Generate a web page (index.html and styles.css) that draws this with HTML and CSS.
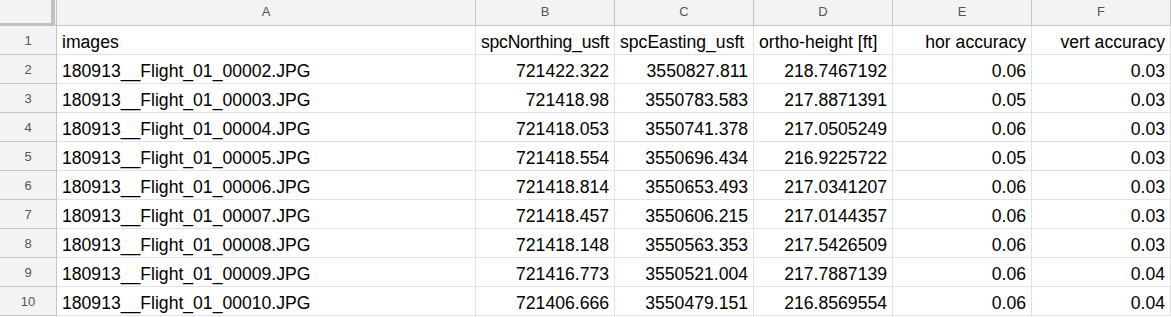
FILE: index.html
```html
<!DOCTYPE html>
<html>
<head>
<meta charset="utf-8">
<link rel="stylesheet" href="styles.css">
</head>
<body>
<div class="sheet">
  <div class="hdr corner"><div class="corner-bar"></div></div>
  <div class="hdr col">A</div>
  <div class="hdr col">B</div>
  <div class="hdr col">C</div>
  <div class="hdr col">D</div>
  <div class="hdr col">E</div>
  <div class="hdr col">F</div>

  <div class="rn">1</div>
  <div class="c">images</div>
  <div class="c tight">spcNorthing_usft</div>
  <div class="c">spcEasting_usft</div>
  <div class="c">ortho-height [ft]</div>
  <div class="c r">hor accuracy</div>
  <div class="c r">vert accuracy</div>

  <div class="rn">2</div>
  <div class="c">180913__Flight_01_00002.JPG</div>
  <div class="c r">721422.322</div>
  <div class="c r">3550827.811</div>
  <div class="c r">218.7467192</div>
  <div class="c r">0.06</div>
  <div class="c r">0.03</div>

  <div class="rn">3</div>
  <div class="c">180913__Flight_01_00003.JPG</div>
  <div class="c r">721418.98</div>
  <div class="c r">3550783.583</div>
  <div class="c r">217.8871391</div>
  <div class="c r">0.05</div>
  <div class="c r">0.03</div>

  <div class="rn">4</div>
  <div class="c">180913__Flight_01_00004.JPG</div>
  <div class="c r">721418.053</div>
  <div class="c r">3550741.378</div>
  <div class="c r">217.0505249</div>
  <div class="c r">0.06</div>
  <div class="c r">0.03</div>

  <div class="rn">5</div>
  <div class="c">180913__Flight_01_00005.JPG</div>
  <div class="c r">721418.554</div>
  <div class="c r">3550696.434</div>
  <div class="c r">216.9225722</div>
  <div class="c r">0.05</div>
  <div class="c r">0.03</div>

  <div class="rn">6</div>
  <div class="c">180913__Flight_01_00006.JPG</div>
  <div class="c r">721418.814</div>
  <div class="c r">3550653.493</div>
  <div class="c r">217.0341207</div>
  <div class="c r">0.06</div>
  <div class="c r">0.03</div>

  <div class="rn">7</div>
  <div class="c">180913__Flight_01_00007.JPG</div>
  <div class="c r">721418.457</div>
  <div class="c r">3550606.215</div>
  <div class="c r">217.0144357</div>
  <div class="c r">0.06</div>
  <div class="c r">0.03</div>

  <div class="rn">8</div>
  <div class="c">180913__Flight_01_00008.JPG</div>
  <div class="c r">721418.148</div>
  <div class="c r">3550563.353</div>
  <div class="c r">217.5426509</div>
  <div class="c r">0.06</div>
  <div class="c r">0.03</div>

  <div class="rn">9</div>
  <div class="c">180913__Flight_01_00009.JPG</div>
  <div class="c r">721416.773</div>
  <div class="c r">3550521.004</div>
  <div class="c r">217.7887139</div>
  <div class="c r">0.06</div>
  <div class="c r">0.04</div>

  <div class="rn">10</div>
  <div class="c">180913__Flight_01_00010.JPG</div>
  <div class="c r">721406.666</div>
  <div class="c r">3550479.151</div>
  <div class="c r">216.8569554</div>
  <div class="c r">0.06</div>
  <div class="c r">0.04</div>
</div>
</body>
</html>
```

FILE: styles.css
```css
html, body {
  margin: 0;
  padding: 0;
  background: #ffffff;
}

.sheet {
  display: grid;
  grid-template-columns: 57px 419px repeat(5, 139px);
  grid-template-rows: 26px repeat(10, 29px);
  font-family: "Liberation Sans", Arial, sans-serif;
}

.sheet > div {
  box-sizing: border-box;
  overflow: hidden;
  white-space: nowrap;
}

.hdr {
  background: #f3f3f3;
  border-right: 1px solid #c4c4c4;
  border-bottom: 1px solid #c4c4c4;
  color: #555555;
  font-size: 13px;
  display: flex;
  align-items: center;
  justify-content: center;
  padding-bottom: 2px;
}

.corner {
  padding: 0 1px 0 0;
  align-items: stretch;
  justify-content: stretch;
}

.corner-bar {
  flex: 1;
  border-right: 4px solid #c0c0c0;
  border-bottom: 4px solid #c0c0c0;
  margin-bottom: -2px;
}

.rn {
  background: #f3f3f3;
  border-right: 1px solid #c4c4c4;
  border-bottom: 1px solid #c4c4c4;
  color: #555555;
  font-size: 13px;
  display: flex;
  align-items: center;
  justify-content: center;
  padding-top: 1px;
}

.c {
  border-right: 1px solid #e2e2e2;
  border-bottom: 1px solid #e2e2e2;
  color: #000000;
  font-size: 17.6px;
  line-height: 24px;
  padding: 4px 5px 0 5px;
  text-align: left;
}

.c.tight {
  letter-spacing: -0.25px;
}

.c.r {
  text-align: right;
}
```
